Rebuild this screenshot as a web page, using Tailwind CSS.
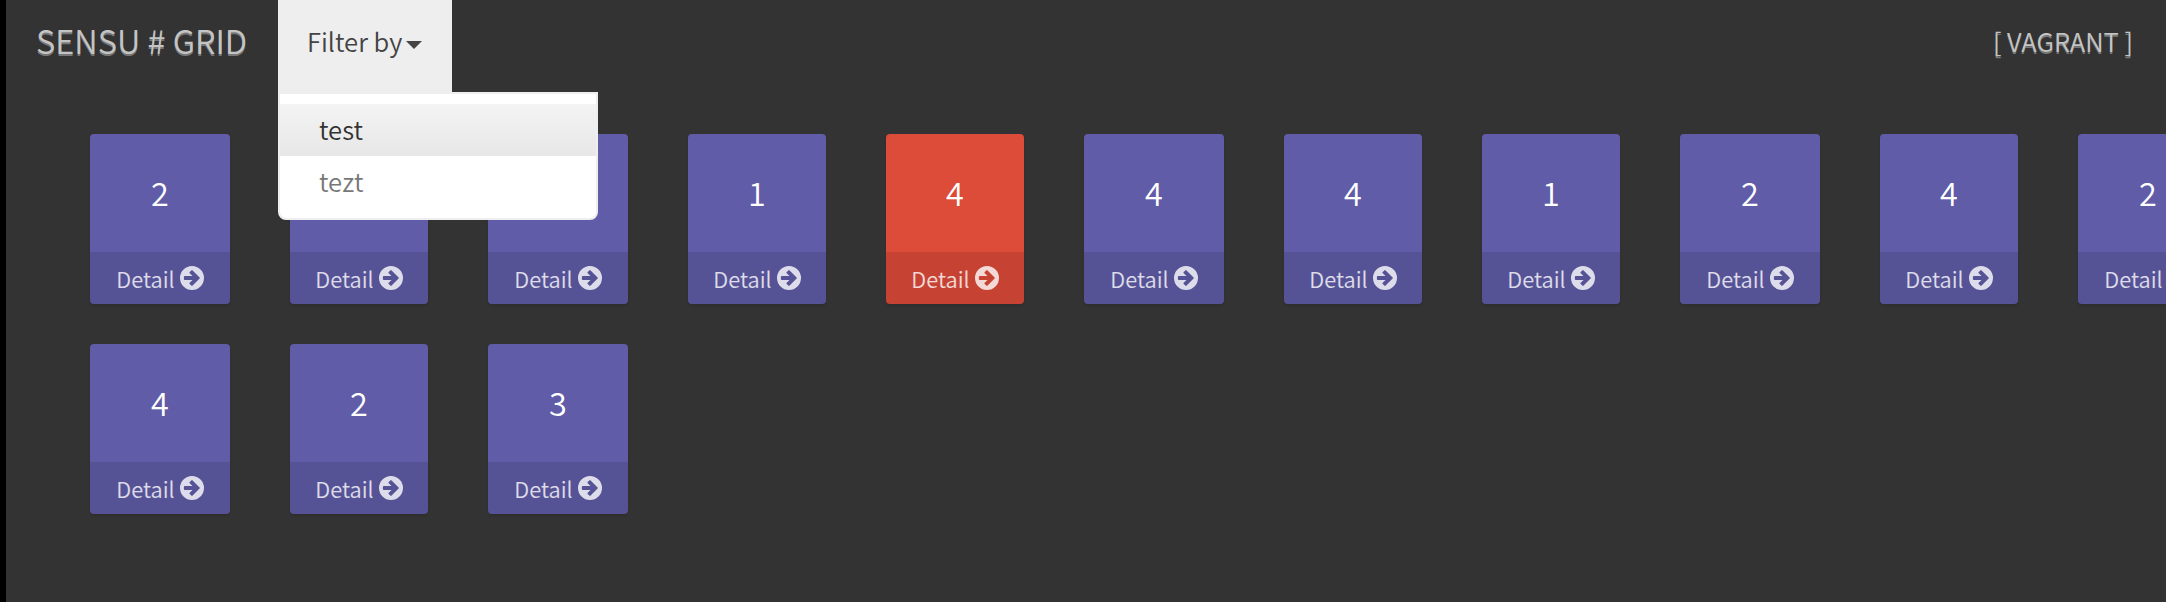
<!DOCTYPE html>
<html lang="en">
<head>
<meta charset="utf-8">
<title>Sensu Grid</title>
<script src="https://cdn.jsdelivr.net/npm/@tailwindcss/browser@4"></script>
</head>
<body class="h-[602px] overflow-hidden border-l-[6px] border-black bg-[#333333] font-['Noto_Sans_CJK_SC',sans-serif] text-[25.6px] font-[350]">
<header class="flex h-[94px] items-start">
  <h1 class="ml-[30px] w-[242px] whitespace-nowrap text-[32.6px] font-[350] leading-[80px] text-[#c4c4c4] [text-shadow:0_2px_0_#777]">SENSU # GRID</h1>
  <div class="relative z-10 h-[94px] w-[174px] bg-[#eeeeee]">
    <a class="flex items-center pl-[29px] leading-[82px] text-[#444444]"><span class="whitespace-nowrap">Filter by</span><svg class="ml-1 mt-2 h-2 w-4 shrink-0" viewBox="0 0 16 8" fill="#444444"><path d="M0 0h16L8 8z"/></svg></a>
    <ul class="absolute left-0 top-[92px] h-[128px] w-[320px] rounded-b-lg border-2 border-[#eeeeee] bg-white pt-[10px] leading-[50px]">
      <li class="h-[52px] bg-linear-to-b from-[#f4f4f4] to-[#e7e7e7] pl-[39px] text-[#333333]">test</li>
      <li class="h-[52px] pl-[39px] text-[#777777]">tezt</li>
    </ul>
    <div class="absolute left-0 top-[90px] h-1 w-[174px] bg-[#eeeeee]"></div>
  </div>
  <div class="ml-auto mr-[33px] whitespace-nowrap leading-[82px] text-[#c4c4c4] [text-shadow:0_2px_0_#777]">[ VAGRANT ]</div>
</header>
<main class="flex flex-col gap-10 pl-[84px] pt-10">
  <div class="row flex" data-values="2,,,1,4!,4,4,1,2,4,2"></div>
  <div class="row flex" data-values="4,2,3"></div>
</main>
<template id="card">
  <section class="flex h-[170px] shrink-0 flex-col overflow-hidden rounded-[4px] bg-[#605ca8] text-center shadow-[0_2px_2px_rgba(0,0,0,0.1)]">
    <div class="value h-[118px] text-[32.4px] leading-[116px] text-white"></div>
    <div class="flex h-[52px] items-center justify-center gap-[5px] bg-black/10 text-[21.8px] leading-[52px] text-white/80">
      <span class="pt-px">Detail</span>
      <svg class="h-6 w-6 shrink-0" viewBox="0 0 24 24" fill="currentColor"><path fill-rule="evenodd" d="M12 0a12 12 0 1 1 0 24 12 12 0 0 1 0-24ZM4.700 10q-.8 0-.8.8v2.400q0 .8.8.8h7.800l-2.800 2.800q-.6.6 0 1.200l1.600 1.600q.7.7 1.300 0l7-7q.6-.6 0-1.200l-7-7q-.6-.7-1.300 0L9.700 6q-.6.6 0 1.200L12.500 10Z"/></svg>
    </div>
  </section>
</template>
<script>
// Column edges fall on even pixels, so card widths alternate slightly.
const even = x => Math.round(x / 2) * 2;
const card = document.getElementById('card');
document.querySelectorAll('.row').forEach(row => {
  row.dataset.values.split(',').forEach((v, i) => {
    const el = card.content.cloneNode(true);
    const section = el.querySelector('section');
    const left = 0.8 + 198.75 * i;
    const right = even(left + 138.75);
    section.style.width = right - even(left) + 'px';
    section.style.marginRight = even(left + 198.75) - right + 'px';
    el.querySelector('.value').textContent = v.replace('!', '');
    if (v.endsWith('!')) section.classList.replace('bg-[#605ca8]', 'bg-[#dd4b39]');
    row.appendChild(el);
  });
});
</script>
</body>
</html>
